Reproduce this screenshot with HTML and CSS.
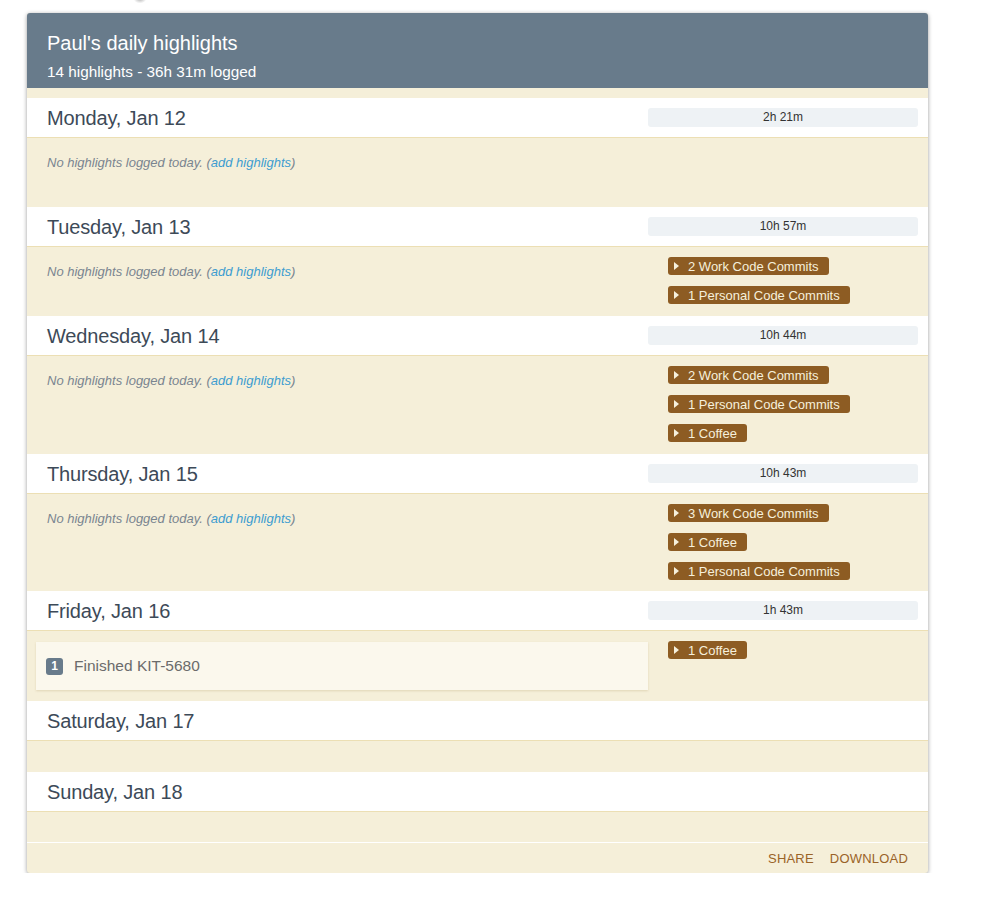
FILE: index.html
```html
<!DOCTYPE html>
<html>
<head>
<meta charset="utf-8">
<link rel="stylesheet" href="styles.css">
</head>
<body>
<div class="dot"></div>
<div class="card">
  <div class="card-head">
    <div class="title">Paul's daily highlights</div>
    <div class="subtitle">14 highlights - 36h 31m logged</div>
  </div>
  <div class="days">
    <div class="day">
      <div class="day-head"><div class="day-name">Monday, Jan 12</div><div class="time">2h 21m</div></div>
      <div class="day-body">
        <div class="left"><p class="empty">No highlights logged today. (<a href="#">add highlights</a>)</p></div>
        <div class="right"></div>
      </div>
    </div>
    <div class="day">
      <div class="day-head"><div class="day-name">Tuesday, Jan 13</div><div class="time">10h 57m</div></div>
      <div class="day-body">
        <div class="left"><p class="empty">No highlights logged today. (<a href="#">add highlights</a>)</p></div>
        <div class="right">
          <span class="tag"><i class="tri"></i>2 Work Code Commits</span>
          <span class="tag"><i class="tri"></i>1 Personal Code Commits</span>
        </div>
      </div>
    </div>
    <div class="day">
      <div class="day-head"><div class="day-name">Wednesday, Jan 14</div><div class="time">10h 44m</div></div>
      <div class="day-body">
        <div class="left"><p class="empty">No highlights logged today. (<a href="#">add highlights</a>)</p></div>
        <div class="right">
          <span class="tag"><i class="tri"></i>2 Work Code Commits</span>
          <span class="tag"><i class="tri"></i>1 Personal Code Commits</span>
          <span class="tag"><i class="tri"></i>1 Coffee</span>
        </div>
      </div>
    </div>
    <div class="day">
      <div class="day-head"><div class="day-name">Thursday, Jan 15</div><div class="time">10h 43m</div></div>
      <div class="day-body">
        <div class="left"><p class="empty">No highlights logged today. (<a href="#">add highlights</a>)</p></div>
        <div class="right tight">
          <span class="tag"><i class="tri"></i>3 Work Code Commits</span>
          <span class="tag"><i class="tri"></i>1 Coffee</span>
          <span class="tag"><i class="tri"></i>1 Personal Code Commits</span>
        </div>
      </div>
    </div>
    <div class="day">
      <div class="day-head"><div class="day-name">Friday, Jan 16</div><div class="time">1h 43m</div></div>
      <div class="day-body">
        <div class="left boxed">
          <div class="highlight"><span class="num">1</span><span class="htext">Finished KIT-5680</span></div>
        </div>
        <div class="right">
          <span class="tag"><i class="tri"></i>1 Coffee</span>
        </div>
      </div>
    </div>
    <div class="day">
      <div class="day-head"><div class="day-name">Saturday, Jan 17</div></div>
      <div class="day-body future"></div>
    </div>
    <div class="day">
      <div class="day-head"><div class="day-name">Sunday, Jan 18</div></div>
      <div class="day-body future last"></div>
    </div>
  </div>
  <div class="card-foot">
    <a href="#" class="action">SHARE</a>
    <a href="#" class="action">DOWNLOAD</a>
  </div>
</div>
</body>
</html>
```

FILE: styles.css
```css
html, body {
  margin: 0;
  padding: 0;
  background: #ffffff;
}
body {
  font-family: "Liberation Sans", Arial, sans-serif;
  padding: 13px 0 0 27px;
  position: relative;
}
.dot {
  position: absolute;
  left: 134px;
  top: -6px;
  width: 12px;
  height: 9px;
  border-radius: 50%;
  background: radial-gradient(ellipse at center, rgba(150,150,150,0.8) 0%, rgba(200,200,200,0.3) 60%, rgba(255,255,255,0) 100%);
}
.card {
  width: 901px;
  background: #f5efd9;
  border-radius: 3px;
  box-shadow: 0 1px 4px rgba(0,0,0,0.4);
  overflow: hidden;
}
.card-head {
  background: #687b8b;
  color: #ffffff;
  height: 75px;
  box-sizing: border-box;
  padding: 18px 20px 0 20px;
}
.title {
  font-size: 20px;
  line-height: 24px;
}
.subtitle {
  font-size: 15.3px;
  line-height: 18px;
  margin-top: 8px;
}
.days {
  padding-top: 10px;
}
.day-head {
  background: #ffffff;
  height: 39px;
  border-bottom: 1px solid #ecdfb4;
  display: flex;
  align-items: center;
  justify-content: space-between;
  padding: 0 10px 0 20px;
}
.day-name {
  font-size: 20px;
  color: #3d4a58;
  line-height: 24px;
  letter-spacing: -0.15px;
}
.time {
  width: 270px;
  height: 19px;
  line-height: 19px;
  background: #eef2f5;
  border-radius: 3px;
  text-align: center;
  font-size: 12px;
  color: #333333;
}
.day-body {
  display: flex;
  min-height: 69px;
}
.day-body.future {
  min-height: 31px;
}
.day-body.future.last {
  min-height: 30px;
}
.left {
  flex: 1;
  padding: 0 20px;
}
.left.boxed {
  padding: 11px 0 11px 9px;
}
.empty {
  margin: 16px 0 0 0;
  font-size: 13px;
  line-height: 18px;
  font-style: italic;
  color: #7a8590;
}
.empty a {
  color: #3d9dd0;
  text-decoration: none;
}
.right {
  box-sizing: border-box;
  width: 280px;
  padding: 10px 10px 12px 20px;
  display: flex;
  flex-direction: column;
  align-items: flex-start;
  gap: 11px;
}
.right.tight {
  gap: 11px;
  padding-bottom: 11px;
}
.tag {
  display: inline-flex;
  align-items: center;
  height: 18px;
  background: #8d5c23;
  color: #f6f0dc;
  font-size: 13px;
  border-radius: 3px;
  padding: 0 10px 0 6px;
  white-space: nowrap;
}
.tri {
  width: 0;
  height: 0;
  border-top: 4px solid transparent;
  border-bottom: 4px solid transparent;
  border-left: 5px solid #f6f0dc;
  margin-right: 9px;
}
.highlight {
  background: #fbf8ed;
  height: 48px;
  display: flex;
  align-items: center;
  padding-left: 10px;
  box-shadow: 0 1px 2px rgba(200,185,140,0.45);
}
.num {
  display: inline-block;
  width: 17px;
  height: 17px;
  line-height: 17px;
  text-align: center;
  background: #687b8b;
  color: #ffffff;
  font-size: 12px;
  font-weight: bold;
  border-radius: 3px;
  margin-right: 11px;
}
.htext {
  font-size: 15.5px;
  color: #6b6b6b;
}
.card-foot {
  border-top: 1px solid #ffffff;
  height: 30px;
  display: flex;
  justify-content: flex-end;
  align-items: center;
  gap: 16px;
  padding-right: 20px;
}
.action {
  font-size: 13px;
  color: #9a6328;
  text-decoration: none;
  letter-spacing: 0.2px;
}
```
